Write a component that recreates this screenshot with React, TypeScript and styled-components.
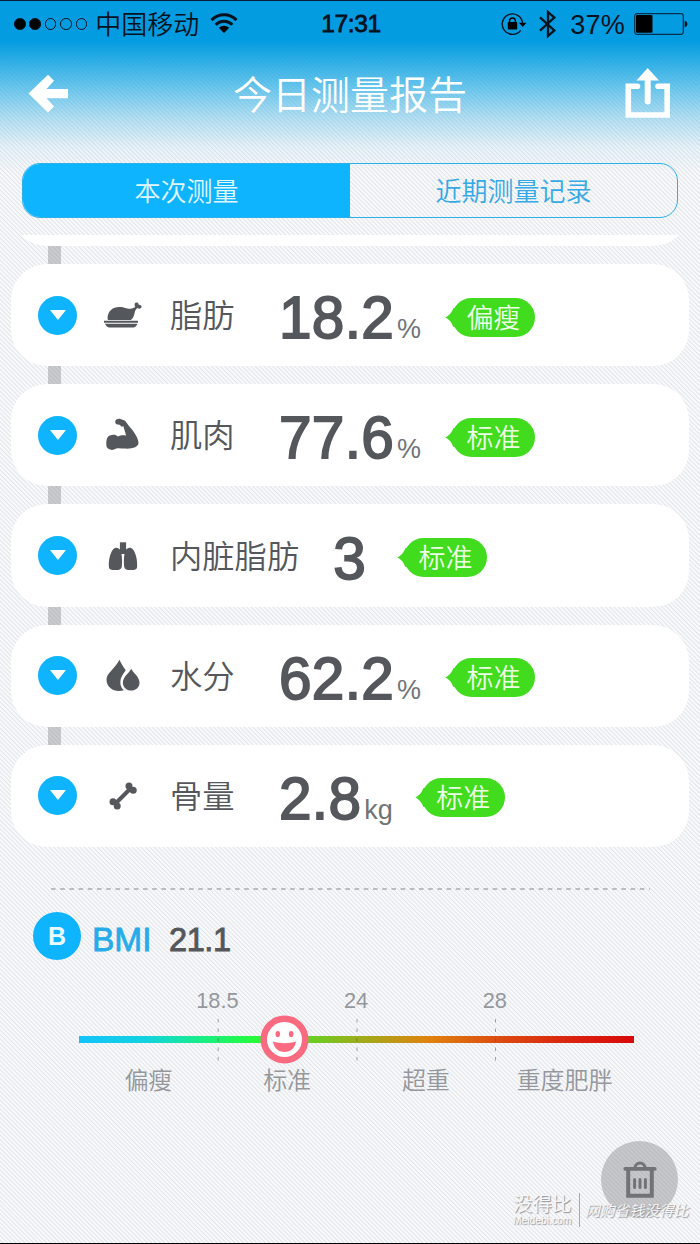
import React from "react";
import styled, { createGlobalStyle } from "styled-components";

const BLUE = "#0fb4ff";
const INK = "#54575b";

const GlobalStyle = createGlobalStyle`
  *, *::before, *::after { box-sizing: border-box; }
  body {
    margin: 0;
    font-family: "Liberation Sans", "Noto Sans CJK SC", sans-serif;
    font-weight: 350;
  }
`;

const Screen = styled.main`
  width: 700px;
  height: 1244px;
  display: flex;
  flex-direction: column;
  position: relative;
  overflow: hidden;
  border-top: 1px solid #0b1c38;
  border-bottom: 1px solid #000;
  background:
    linear-gradient(
      180deg,
      #049ce0 0,
      #049ce0 40px,
      rgba(8, 160, 226, 0.88) 56px,
      rgba(22, 168, 228, 0.65) 84px,
      rgba(60, 180, 230, 0.38) 116px,
      rgba(130, 205, 240, 0.14) 146px,
      rgba(170, 220, 245, 0) 172px
    ),
    repeating-linear-gradient(45deg, #f8f9fb 0, #f8f9fb 1.2px, #e1e3e7 2.2px, #f8f9fb 3.094px);
`;

const StatusBar = styled.header`
  height: 46px;
  display: grid;
  grid-template-columns: 1fr auto 1fr;
  align-items: center;
  padding: 0 12px 0 14px;
  color: #04121f;
`;

const StatusSide = styled.div<{ $end?: boolean }>`
  display: flex;
  align-items: center;
  justify-content: ${(p) => (p.$end ? "flex-end" : "flex-start")};
`;

const Signal = styled.div`
  display: flex;
  gap: 3.8px;
  margin-right: 8px;
`;

const SignalDot = styled.i<{ $on: boolean }>`
  width: 11.6px;
  height: 11.6px;
  border-radius: 50%;
  border: 1px solid #04121f;
  background: ${(p) => (p.$on ? "#000" : "transparent")};
`;

const Carrier = styled.span`
  font-size: 26px;
  line-height: 30px;
  margin: 1px 11px 0 0;
`;

const Clock = styled.time`
  font-size: 24.5px;
  line-height: 30px;
  letter-spacing: -0.4px;
  -webkit-text-stroke: 0.8px currentColor;
`;

const Percent = styled.span`
  font-size: 27px;
  line-height: 30px;
  letter-spacing: 0.2px;
  margin: 1px 9px 0 13px;
`;

const NavBar = styled.nav`
  height: 94px;
  display: grid;
  grid-template-columns: 80px 1fr 80px;
  align-items: center;
  color: #fff;
`;

const NavButton = styled.button<{ $end?: boolean }>`
  display: flex;
  justify-content: ${(p) => (p.$end ? "flex-end" : "flex-start")};
  padding: ${(p) => (p.$end ? "0 29px 0 0" : "0 0 0 28px")};
  border: 0;
  background: none;
  color: inherit;
`;

const Title = styled.h1`
  margin: 3px 0 0;
  text-align: center;
  font-size: 39px;
  line-height: 50px;
  font-weight: inherit;
`;

const Tabs = styled.div`
  display: flex;
  height: 55px;
  margin: 22px 22px 0;
  border: 1px solid #2bb0ea;
  border-radius: 18px;
  overflow: hidden;
  flex: none;
`;

const Tab = styled.button<{ $active?: boolean }>`
  flex: 1;
  padding: 2px 0 0;
  border: 0;
  font: inherit;
  font-size: 26px;
  line-height: 30px;
  background: ${(p) => (p.$active ? BLUE : "transparent")};
  color: ${(p) => (p.$active ? "#e2f8ff" : "#35a9e4")};
`;

const Results = styled.section`
  height: 612px;
  margin-top: 17px;
  padding: 0 11px;
  overflow: hidden;
  flex: none;
  display: flex;
  flex-direction: column;
  justify-content: flex-end;
`;

const Connector = styled.div`
  flex: none;
  width: 13px;
  height: 18px;
  margin-left: 37px;
  background: rgba(120, 122, 124, 0.36);
`;

const Card = styled.article`
  flex: none;
  height: 102.2px;
  display: flex;
  align-items: center;
  padding-left: 27px;
  border-radius: 36px;
  background: #fff;
`;

const Toggle = styled.button`
  width: 39px;
  height: 39px;
  padding: 0 0 1px;
  border: 0;
  border-radius: 50%;
  display: grid;
  place-items: center;
  background: ${BLUE};
`;

const Caret = styled.i`
  border: solid transparent;
  border-width: 10px 8px 0;
  border-top-color: #fff;
`;

const IconBox = styled.span`
  width: 48px;
  margin: 0 23px 0 22px;
  display: flex;
  justify-content: center;
  color: ${INK};
`;

const Label = styled.span`
  min-width: 75px;
  margin: 2px 34px 0 0;
  font-size: 32.3px;
  line-height: 40px;
  color: ${INK};
`;

const Reading = styled.span`
  font-size: 58.5px;
  line-height: 60px;
  margin-top: 6px;
  letter-spacing: 0.3px;
  color: ${INK};
  -webkit-text-stroke: 1.8px ${INK};
  white-space: nowrap;
`;

const Unit = styled.small`
  font-size: 27px;
  line-height: 1;
  letter-spacing: 0;
  margin-left: 3px;
  color: #717477;
  -webkit-text-stroke: 0;
`;

const TAG_GAP: Record<string, number> = { "%": 31, kg: 29, "": 38 };

const Tag = styled.span<{ $unit: string }>`
  position: relative;
  width: 83px;
  height: 39px;
  margin: 4px 0 0 ${(p) => TAG_GAP[p.$unit]}px;
  border-radius: 20px;
  background: #41dc1d;
  color: #eeffe8;
  font-size: 27px;
  line-height: 42px;
  text-align: center;
`;

const TagTail = styled.svg`
  position: absolute;
  left: -7px;
  top: 10px;
`;

const Divider = styled.svg`
  display: block;
  flex: none;
  margin: 41px 0 0 51px;
`;

const BmiHead = styled.div`
  display: flex;
  align-items: center;
  height: 49px;
  margin: 21px 0 0 33px;
  flex: none;
`;

const BmiBadge = styled.span`
  width: 48px;
  height: 48px;
  border-radius: 50%;
  background: ${BLUE};
  color: #e9faff;
  font-size: 25px;
  font-weight: 700;
  line-height: 49px;
  text-align: center;
`;

const BmiName = styled.span`
  margin: 9px 0 0 11px;
  width: 77px;
  font-size: 33.5px;
  line-height: 40px;
  color: #27abe9;
  -webkit-text-stroke: 0.8px #27abe9;
`;

const BmiValue = styled.span`
  margin-top: 9px;
  font-size: 32.5px;
  line-height: 40px;
  letter-spacing: -0.4px;
  color: ${INK};
  -webkit-text-stroke: 0.9px ${INK};
`;

const Scale = styled.section`
  width: 555px;
  margin: 27px 0 0 79px;
  color: #94979c;
  flex: none;
`;

const Limits = styled.div`
  display: grid;
  grid-template-columns: repeat(3, 1fr);
  margin: 0 69.8px 0 69px;
  text-align: center;
  font-size: 21.8px;
  line-height: 28px;
`;

const Track = styled.div`
  position: relative;
  height: 7px;
  margin-top: 21px;
  background: linear-gradient(
    90deg,
    #12c3fa 0%,
    #12d2e0 12%,
    #17ec8e 21%,
    #24fb3e 31%,
    #5fd425 40%,
    #9aaf1b 50%,
    #e0820f 63%,
    #dc4b10 76%,
    #da1f0e 90%,
    #d80a0a 100%
  );
`;

const Ticks = styled.svg`
  position: absolute;
  left: 0;
  top: -18px;
`;

const Marker = styled.svg`
  position: absolute;
  left: 181px;
  top: -21px;
`;

const Zones = styled.div`
  display: grid;
  grid-template-columns: repeat(4, 1fr);
  margin-top: 22px;
  text-align: center;
  font-size: 24px;
  line-height: 32px;
`;

const DeleteButton = styled.button`
  position: absolute;
  right: 22px;
  bottom: 25px;
  width: 77px;
  height: 77px;
  padding: 0;
  border: 0;
  border-radius: 50%;
  display: grid;
  place-items: center;
  background: rgba(130, 131, 133, 0.42);
`;

const Watermark = styled.div`
  position: absolute;
  right: 8px;
  bottom: 16px;
  display: flex;
  align-items: center;
  color: #f8f8f9;
  text-shadow: 1px 1px 1px #8d8f92;
`;

const Brand = styled.div`
  width: 67px;
  border-right: 1px solid #a6a8aa;
  font-size: 19.5px;
  line-height: 22px;
`;

const Site = styled.div`
  font-family: "Liberation Sans", sans-serif;
  font-size: 10.3px;
  line-height: 12px;
`;

const Slogan = styled.div`
  width: 112px;
  padding: 1px 0 0 5px;
  font-size: 14.8px;
  line-height: 24px;
  font-style: italic;
  white-space: nowrap;
`;

const Wifi = () => (
  <svg width="28" height="22" viewBox="0 0 28 22" fill="none" stroke="#04121f" strokeWidth="3">
    <path d="M1.5 7.1C8.5 0 19.5 0 26.5 7.1" />
    <path d="M5.7 11.8C10.5 7.1 17.5 7.1 22.3 11.8" />
    <path d="M14 20L8.8 14.8C12 12.1 16 12.1 19.2 14.8Z" fill="#000" stroke="none" />
  </svg>
);

const RotationLock = () => (
  <svg width="26" height="24" viewBox="0 0 26 24">
    <path d="M19.6 18.3A10.2 10.2 0 1 1 21.6 11" fill="none" stroke="#04121f" strokeWidth="1.4" />
    <path d="M18 10.8h7.4l-3.7 4.2z" fill="#000" />
    <rect x="6.8" y="10" width="9.4" height="7.6" rx="0.8" fill="#000" />
    <path d="M8.6 10.5V8.8a2.9 2.9 0 0 1 5.8 0v1.7" fill="none" stroke="#000" strokeWidth="1.5" />
  </svg>
);

const BluetoothSvg = styled.svg`
  margin-left: 12px;
`;

const Bluetooth = () => (
  <BluetoothSvg width="18" height="30" viewBox="0 0 18 30" fill="none" stroke="#04121f" strokeWidth="2.3">
    <path d="M1 8.3L15.3 21.4L9 27V3L15.3 8.6L1 21.7" />
  </BluetoothSvg>
);

const Battery = () => (
  <svg width="54" height="23" viewBox="0 0 54 23">
    <rect x="0.7" y="0.7" width="48.6" height="20.6" rx="2.5" fill="none" stroke="#04304c" strokeWidth="1.2" />
    <rect x="2" y="2" width="16.5" height="17.8" rx="1" fill="#000" />
    <path d="M50.7 7.8c3.6.6 3.6 6 0 6.6z" fill="#04121f" />
  </svg>
);

const BackArrow = () => (
  <svg width="41" height="40" viewBox="0 0 41 40" fill="#fff">
    <path d="M20 0.7L26 6.8L18.5 15H40V24.2H18.5L26 32.5L20 38.6L0.5 19.6Z" />
  </svg>
);

const Share = () => (
  <svg width="46" height="52" viewBox="0 0 46 52" fill="none" stroke="#fff">
    <path d="M12.5 18.3H3.3V47H42.2V18.3H33" strokeWidth="5.6" strokeLinecap="round" />
    <path d="M22.7 10V33.5" strokeWidth="6" strokeLinecap="round" />
    <path d="M22.7 0L34 12.5H11.5Z" fill="#fff" stroke="none" />
  </svg>
);

const Turkey = () => (
  <svg width="40" height="27" viewBox="0 0 40 27" fill="currentColor">
    <path d="M4.8 18C3.8 12 7 6.3 14 5.2c4-.6 7 .2 10.3 1.3 3 .7 5.3-.1 8-1.5-1.5-2.6-.4-5 1.7-4.5 1.3.3 1.800 1.500 1.700 2.200 2-.2 3.300 1.200 2.800 2.600-.5 1.500-2.500 1.900-4.300.7-2.500 2.400-2.400 4.800-3.200 7.200-.8 2.400-2 3.900-3.200 4.800z" />
    <path d="M1 18.7h34v2H1zM2 21.7h32.500c-1 2.300-2.400 3.700-4.500 3.700H6.500C4.500 25.400 3 24 2 21.700z" />
  </svg>
);

const Muscle = () => (
  <svg width="34" height="34" viewBox="0 0 34 34" fill="currentColor">
    <path d="M9.200 3.500C9.500 1.300 12.300.2 15 1.200c2.500.9 4 .9 5.400 3.200 1.800 3 4 4.600 6.600 8.400 2.900 4.200 5.500 8.600 5.500 12.300 0 4-6.500 6.200-14.500 5.500-2.500-.2-4.500-.6-6.800-.3C8.500 31 7 32.600 4 31.500 1.700 30.700.2 29.500.3 26.500c.2-4 .1-7.500 3.500-8.900 3.500-1.400 6.200-1 8 1 2.500-1.500 5.300-1.700 8.200-1.200-.6-3.300-2-6.400-2.500-9.200l-1.800.5C14.500 7 13 6.500 11.500 6.500 10 6.500 9 5 9.200 3.500z" />
  </svg>
);

const Lungs = () => (
  <svg width="30" height="30" viewBox="0 0 30 30" fill="currentColor">
    <path d="M11.9 1.300h6.200V13h-6.200z" />
    <path d="M12.500 9.500C10.500 6 7 5.800 5 8.500 2 12.500.5 19 .9 26c.4 3 2.700 2.900 5.600 3 3.400.2 6.700-.1 7.300-3 .5-4 .6-12-1.300-16.500z" />
    <path d="M17.500 9.500c2-3.500 5.500-3.700 7.500-1C28 12.500 29.500 19 29.100 26c-.4 3-2.700 2.900-5.600 3-3.400.2-6.700-.1-7.300-3-.5-4-.6-12 1.300-16.500z" />
  </svg>
);

const Drops = () => (
  <svg width="34" height="33" viewBox="0 0 34 33" fill="currentColor">
    <path d="M13.4.7c2 4.500 4.300 7.300 6.300 10.500-2.400 3.600-5.400 7.500-5.400 11.700 0 4 1.500 6.700 3.700 8.300C9 34 .5 29 .5 20.500.5 13.800 9.500 9.500 13.400.7z" />
    <path d="M25.200 9.800c2 4.300 8.300 8 8.300 14 0 4.600-3.800 7.800-8.400 7.800s-8.200-3.300-8.200-7.800c0-6 6.300-9.700 8.300-14z" />
  </svg>
);

const Bone = () => (
  <svg width="28" height="28" viewBox="0 0 28 28" fill="currentColor">
    <path d="M6.5 21.5L21.5 6.5" stroke="currentColor" strokeWidth="4" />
    <circle cx="20" cy="4" r="3.5" />
    <circle cx="24.2" cy="8.2" r="3.5" />
    <circle cx="4" cy="19.8" r="3.5" />
    <circle cx="8.2" cy="24" r="3.5" />
  </svg>
);

const Trash = () => (
  <svg width="34" height="38" viewBox="0 0 34 38" fill="none" stroke="#727374">
    <path d="M5.2 9V34.7H28.8V9" strokeWidth="4" />
    <path d="M2.2 7.9H31.8" strokeWidth="3.6" strokeLinecap="round" />
    <path d="M12 7a5 5 0 0 1 10 0" strokeWidth="3" />
    <path d="M11.6 18.5v8M17 18.5v8M22.4 18.5v8" strokeWidth="3" strokeLinecap="round" />
  </svg>
);

const items = [
  { name: "脂肪", value: "18.2", unit: "%", status: "偏瘦", Icon: Turkey },
  { name: "肌肉", value: "77.6", unit: "%", status: "标准", Icon: Muscle },
  { name: "内脏脂肪", value: "3", unit: "", status: "标准", Icon: Lungs },
  { name: "水分", value: "62.2", unit: "%", status: "标准", Icon: Drops },
  { name: "骨量", value: "2.8", unit: "kg", status: "标准", Icon: Bone },
];

export default function App() {
  return (
    <>
      <GlobalStyle />
      <Screen>
        <StatusBar>
          <StatusSide>
            <Signal>
              {[true, true, false, false, false].map((on, i) => (
                <SignalDot key={i} $on={on} />
              ))}
            </Signal>
            <Carrier>中国移动</Carrier>
            <Wifi />
          </StatusSide>
          <Clock>17:31</Clock>
          <StatusSide $end>
            <RotationLock />
            <Bluetooth />
            <Percent>37%</Percent>
            <Battery />
          </StatusSide>
        </StatusBar>

        <NavBar>
          <NavButton aria-label="返回">
            <BackArrow />
          </NavButton>
          <Title>今日测量报告</Title>
          <NavButton $end aria-label="分享">
            <Share />
          </NavButton>
        </NavBar>

        <Tabs>
          <Tab $active>本次测量</Tab>
          <Tab>近期测量记录</Tab>
        </Tabs>

        <Results>
          <Card />
          {items.map(({ name, value, unit, status, Icon }) => (
            <React.Fragment key={name}>
              <Connector />
              <Card>
                <Toggle aria-label="展开">
                  <Caret />
                </Toggle>
                <IconBox>
                  <Icon />
                </IconBox>
                <Label>{name}</Label>
                <Reading>
                  {value}
                  {unit && <Unit>{unit}</Unit>}
                </Reading>
                <Tag $unit={unit}>
                  <TagTail width="12" height="19" viewBox="0 0 12 19">
                    <path d="M0.5 9.5C5 7 6.5 4.5 8.5 0H12V19H8.5C6.500 14.500 5 12 0.500 9.500z" fill="#41dc1d" />
                  </TagTail>
                  {status}
                </Tag>
              </Card>
            </React.Fragment>
          ))}
        </Results>

        <Divider width="599" height="2" viewBox="0 0 599 2">
          <path d="M0 1H599" stroke="#a9abae" strokeWidth="1.4" strokeDasharray="4.6 4.6" />
        </Divider>

        <BmiHead>
          <BmiBadge>B</BmiBadge>
          <BmiName>BMI</BmiName>
          <BmiValue>21.1</BmiValue>
        </BmiHead>

        <Scale>
          <Limits>
            <span>18.5</span>
            <span>24</span>
            <span>28</span>
          </Limits>
          <Track>
            <Ticks width="555" height="44" viewBox="0 0 555 44">
              <path
                d="M139.2 1V43M278 1V43M416.5 1V43"
                stroke="#5b5d60"
                strokeOpacity="0.55"
                strokeDasharray="3.5 6"
              />
            </Ticks>
            <Marker width="49" height="49" viewBox="0 0 49 49">
              <circle cx="24.5" cy="24.5" r="24" fill="#fa6a80" />
              <circle cx="24.5" cy="24.5" r="17.5" fill="#fff" />
              <ellipse cx="17.8" cy="19" rx="2.3" ry="3.1" fill="#fa6a80" />
              <ellipse cx="31.2" cy="19" rx="2.3" ry="3.1" fill="#fa6a80" />
              <path d="M13 26.5c7 2.2 16 2.2 23 0-1 6.500-5.500 10.500-11.500 10.500S14 33 13 26.500z" fill="#fa6a80" />
            </Marker>
          </Track>
          <Zones>
            <span>偏瘦</span>
            <span>标准</span>
            <span>超重</span>
            <span>重度肥胖</span>
          </Zones>
        </Scale>

        <DeleteButton aria-label="删除">
          <Trash />
        </DeleteButton>

        <Watermark>
          <Brand>
            没得比
            <Site>Meidebi.com</Site>
          </Brand>
          <Slogan>网购省钱没得比</Slogan>
        </Watermark>
      </Screen>
    </>
  );
}
